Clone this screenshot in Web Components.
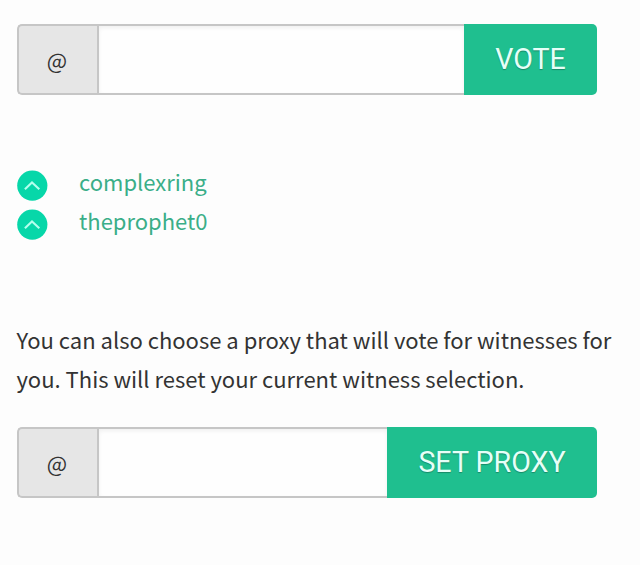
<!DOCTYPE html>
<html lang="en">
<head>
<meta charset="utf-8">
<title>Witness voting</title>
<style>
  body {
    margin: 0;
    background: #fdfdfd;
    color: #333;
    font: 22px/39px "Noto Sans CJK SC", "Noto Sans", sans-serif;
  }
</style>
</head>
<body>
<witness-page></witness-page>

<script>
class AccountField extends HTMLElement {
  constructor() {
    super();
    this.attachShadow({ mode: "open" });
    this.shadowRoot.innerHTML = `
      <style>
        :host {
          display: flex;
          width: 580px;
          height: 71px;
        }
        .prefix {
          box-sizing: border-box;
          width: 80px;
          padding: 0 2px 1px 0;
          display: flex;
          align-items: center;
          justify-content: center;
          background: #e6e6e6;
          border: 2px solid #c6c6c6;
          border-right: 0;
          border-radius: 5px 0 0 5px;
          font-size: 21.5px;
        }
        input {
          box-sizing: border-box;
          flex: 1;
          min-width: 0;
          margin: 0;
          padding: 0 14px;
          border: 2px solid #c6c6c6;
          border-right: 0;
          border-radius: 0;
          background: #fefefe;
          box-shadow: inset 0 2px 4px rgba(10, 10, 10, .06);
          font: inherit;
          outline: 0;
        }
        button {
          width: var(--button-width, 133px);
          margin: 0;
          padding: 0 0 1px;
          border: 0;
          border-radius: 0 5px 5px 0;
          background: #1fbf8f;
          color: #e6fff8;
          font: 28.6px/34px Roboto, sans-serif;
          text-transform: uppercase;
          text-shadow: 0 1px 1px rgba(0, 0, 0, .28);
          white-space: nowrap;
        }
      </style>
      <span class="prefix">@</span>
      <input type="text" aria-label="account">
      <button type="button"><slot></slot></button>`;
  }
}

class WitnessVote extends HTMLElement {
  constructor() {
    super();
    this.attachShadow({ mode: "open" });
    this.shadowRoot.innerHTML = `
      <style>
        :host {
          display: flex;
          height: 39px;
          align-items: center;
          gap: 31px;
          color: #3aae88;
        }
        svg {
          flex: none;
          width: 31px;
          height: 31px;
        }
        span {
          margin-top: -8px;
        }
      </style>
      <svg viewBox="0 0 31 31" aria-hidden="true">
        <circle cx="15.3" cy="15.6" r="15.1" fill="#07d7a9"/>
        <path d="M7.9 19.2 15 12.5 22.3 19.2" fill="none" stroke="#b4ffee" stroke-width="2.1"/>
      </svg>
      <span><slot></slot></span>`;
  }
}

class WitnessPage extends HTMLElement {
  constructor() {
    super();
    this.attachShadow({ mode: "open" });
    this.shadowRoot.innerHTML = `
      <style>
        :host {
          display: block;
          box-sizing: border-box;
          height: 565px;
          padding: 24px 16px 0 17px;
        }
        .votes {
          margin-top: 71px;
        }
        p {
          margin: 76px 0 29px -0.5px;
          white-space: nowrap;
        }
        .proxy {
          --button-width: 210px;
        }
      </style>
      <account-field>Vote</account-field>
      <div class="votes">
        <witness-vote>complexring</witness-vote>
        <witness-vote>theprophet0</witness-vote>
      </div>
      <p>You can also choose a proxy that will vote for witnesses for<br>you. This will reset your current witness selection.</p>
      <account-field class="proxy">Set Proxy</account-field>`;
  }
}

customElements.define("account-field", AccountField);
customElements.define("witness-vote", WitnessVote);
customElements.define("witness-page", WitnessPage);
</script>
</body>
</html>
